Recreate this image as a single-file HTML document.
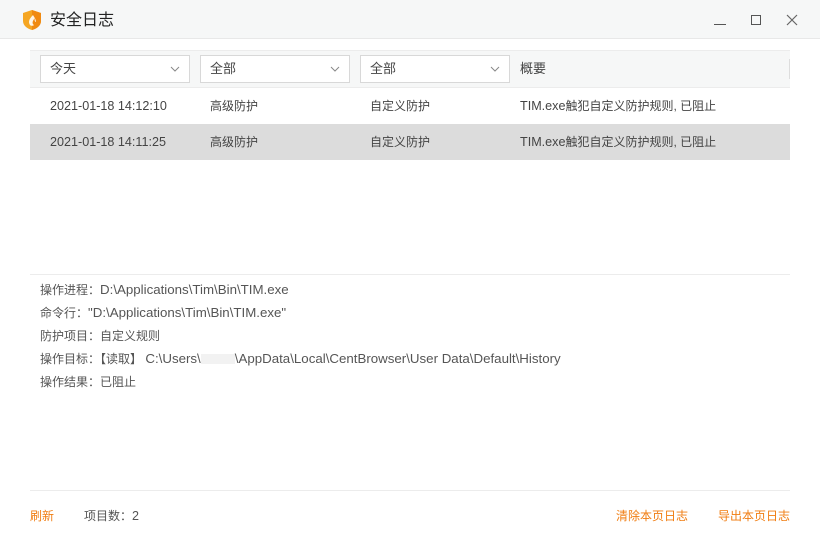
<!DOCTYPE html><html><head><meta charset="utf-8"><style>
*{margin:0;padding:0;box-sizing:border-box}
body{width:820px;height:540px;background:#fff;font-family:"Liberation Sans","Noto Sans CJK SC",sans-serif;position:relative;overflow:hidden;color:#333}
.a{position:absolute}
.t{font-size:12px;white-space:nowrap;line-height:16px}
.dd{position:absolute;top:55px;width:150px;height:28px;border:1px solid #d8d8d8;background:#fff;font-size:13px;color:#444;padding:0 9px;line-height:26px}
.dd svg{position:absolute;right:9px;top:10px}
.row{position:absolute;left:30px;width:760px;height:36px;font-size:12px;color:#444}
.row span{position:absolute;top:10px;white-space:nowrap;line-height:16px}
.row .l{font-size:12.6px}
.d{position:absolute;left:40px;font-size:12px;color:#555;white-space:nowrap;line-height:16px}
.d .l{font-size:13.3px}
</style></head><body>
<div class="a" style="left:0;top:0;width:820px;height:39px;background:#f6f7f7;border-bottom:1px solid #e8e8e8"></div>
<svg class="a" style="left:22px;top:9px" width="20" height="22" viewBox="0 0 20 22"><path d="M10 1 L19 4 V12 C19 17 14 20 10 21 C6 20 1 17 1 12 V4Z" fill="#f5a623"/><path d="M10 1 L19 4 V12 C19 17 14 20 10 21Z" fill="#f08a12"/><path d="M11 6 C7 10 6 13 8 16 C9 17 11 17 12 16 C10 15 10 12 13 9 C12 11 13 13 14 13 C14 10 12 8 11 6Z" fill="#fff" opacity=".9"/></svg>
<div class="a" style="left:50px;top:10px;font-size:16px;color:#222;line-height:22px">安全日志</div>
<div class="a" style="left:714px;top:24px;width:12px;height:1px;background:#555"></div>
<div class="a" style="left:751px;top:15px;width:10px;height:10px;border:1px solid #555"></div>
<svg class="a" style="left:786px;top:14px" width="12" height="12"><path d="M1 1L11 11M11 1L1 11" stroke="#666" stroke-width="1.2"/></svg>
<div class="a" style="left:30px;top:50px;width:760px;height:38px;background:#f6f7f7;border-top:1px solid #ececec;border-bottom:1px solid #ececec"></div>
<div class="a" style="left:789px;top:59px;width:1px;height:20px;background:#ddd"></div>
<div class="dd" style="left:40px">今天<svg width="10" height="6"><path d="M1 1L5 5L9 1" stroke="#888" fill="none"/></svg></div>
<div class="dd" style="left:200px">全部<svg width="10" height="6"><path d="M1 1L5 5L9 1" stroke="#888" fill="none"/></svg></div>
<div class="dd" style="left:360px">全部<svg width="10" height="6"><path d="M1 1L5 5L9 1" stroke="#888" fill="none"/></svg></div>
<div class="a" style="left:520px;top:60px;font-size:13px;color:#444;line-height:18px">概要</div>
<div class="row" style="top:88px"><span class="l" style="left:20px">2021-01-18 14:12:10</span><span style="left:180px">高级防护</span><span style="left:340px">自定义防护</span><span style="left:490px"><span class="l" style="position:static">TIM.exe</span>触犯自定义防护规则, 已阻止</span></div>
<div class="row" style="top:124px;background:#dcdcdc"><span class="l" style="left:20px">2021-01-18 14:11:25</span><span style="left:180px">高级防护</span><span style="left:340px">自定义防护</span><span style="left:490px"><span class="l" style="position:static">TIM.exe</span>触犯自定义防护规则, 已阻止</span></div>
<div class="a" style="left:30px;top:274px;width:760px;height:1px;background:#ececec"></div>
<div class="d" style="top:282px">操作进程：<span class="l">D:\Applications\Tim\Bin\TIM.exe</span></div>
<div class="d" style="top:305px">命令行：<span class="l">"D:\Applications\Tim\Bin\TIM.exe"</span></div>
<div class="d" style="top:328px">防护项目：自定义规则</div>
<div class="d" style="top:351px">操作目标：【读取】 <span class="l">C:\Users\<span style="display:inline-block;width:34px;height:10px;background:#f2f2f2;vertical-align:middle"></span>\AppData\Local\CentBrowser\User Data\Default\History</span></div>
<div class="d" style="top:374px">操作结果：已阻止</div>
<div class="a" style="left:30px;top:490px;width:760px;height:1px;background:#ececec"></div>
<div class="a t" style="left:30px;top:508px;color:#f07d12">刷新</div>
<div class="a t" style="left:84px;top:508px;color:#555">项目数：<span style="font-size:12.6px">2</span></div>
<div class="a t" style="left:616px;top:508px;color:#f07d12">清除本页日志</div>
<div class="a t" style="left:718px;top:508px;color:#f07d12">导出本页日志</div>
</body></html>
